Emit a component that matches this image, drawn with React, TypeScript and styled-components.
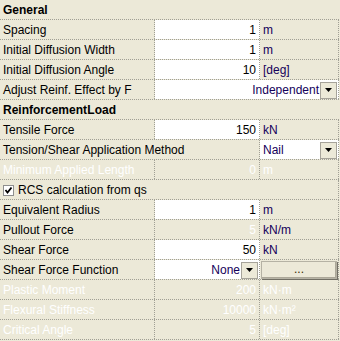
import styled, { createGlobalStyle } from "styled-components";

const GlobalStyle = createGlobalStyle`
	html, body {
		margin: 0;
		padding: 0;
		background: #ECE9D8;
	}
	body {
		font-family: "Liberation Sans", Arial, sans-serif;
		font-size: 12px;
		color: #000;
	}
`;

const LINE = "1px dotted #A09F94";

const Grid = styled.div`
	display: flex;
	flex-direction: column;
	width: 339px;
	height: 341px;
	background: #ECE9D8;
`;

const SectionRow = styled.div`
	display: flex;
	align-items: center;
	height: 20px;
	box-sizing: border-box;
	border-bottom: ${LINE};
	padding-left: 3px;
	font-weight: 700;
	font-size: 12px;
	word-spacing: -3px;
`;

const Row = styled.div`
	display: grid;
	grid-template-columns: 155px 105px 79px;
	height: 20px;
	box-sizing: border-box;
	border-bottom: ${LINE};
`;

const WideRow = styled.div`
	display: flex;
	align-items: center;
	gap: 4px;
	height: 20px;
	box-sizing: border-box;
	border-bottom: ${LINE};
	border-right: ${LINE};
	padding-left: 3px;
`;

const Cell = styled.div<{ $white?: boolean; $disabled?: boolean; $noLine?: boolean }>`
	display: flex;
	align-items: center;
	box-sizing: border-box;
	border-right: ${p => (p.$noLine ? "none" : LINE)};
	background: ${p => (p.$white ? "#FFFFFF" : "transparent")};
	color: ${p => (p.$disabled ? "#FFFFFF" : "inherit")};
	white-space: nowrap;
	min-width: 0;
`;

const LabelCell = styled(Cell)`
	padding-left: 3px;
	overflow: visible;
`;

const ValueCell = styled(Cell)`
	justify-content: flex-end;
	padding-right: 3px;
`;

const UnitCell = styled(Cell)`
	padding-left: 3px;
	color: ${p => (p.$disabled ? "#FFFFFF" : "#14005A")};
`;

const ComboCell = styled(Cell)<{ $span?: number }>`
	grid-column: span ${p => p.$span ?? 1};
	justify-content: flex-end;
	padding-right: 1px;
	gap: 1px;
	color: #14005A;
`;

const ComboText = styled.span<{ $left?: boolean }>`
	flex: ${p => (p.$left ? 1 : "none")};
	padding-left: ${p => (p.$left ? "3px" : "0")};
`;

const DropButton = styled.div`
	width: 17px;
	height: 17px;
	box-sizing: border-box;
	border: 1px solid #A6A39A;
	background: #ECE9D8;
	display: flex;
	align-items: center;
	justify-content: center;
	margin-top: 1px;
	flex: none;
`;

const Arrow = () => (
	<svg width="7" height="4" viewBox="0 0 7 4">
		<polygon points="0,0 7,0 3.5,4" fill="#000" />
	</svg>
);

const ButtonCell = styled(Cell)`
	display: block;
`;

const EllipsisButton = styled.div`
	display: flex;
	align-items: center;
	justify-content: center;
	margin: 1px 1px 0 1px;
	height: 18px;
	box-sizing: border-box;
	border: 1px solid;
	border-color: #FFFFFF #8E8C80 #8E8C80 #FFFFFF;
	box-shadow: 1px 1px 0 #716F64, inset -1px -1px 0 #ACA899;
	outline: 1px solid #B5B2A4;
	outline-offset: -1px;
	background: #ECE9D8;
	color: #3A2A00;
	font-size: 12px;
	padding-bottom: 3px;
`;

const CheckBox = styled.span`
	width: 11px;
	height: 11px;
	box-sizing: border-box;
	border: 1px solid #8E8F8F;
	background: #FFFFFF;
	display: inline-flex;
	align-items: center;
	justify-content: center;
	margin-top: 1px;
`;

type Line = {
	label: string;
	value?: string;
	unit?: string;
	white?: boolean;
	disabled?: boolean;
	labelDisabled?: boolean;
	unitDisabled?: boolean;
};

const NumRow = ({ label, value, unit, white, disabled, labelDisabled, unitDisabled }: Line) => (
	<Row>
		<LabelCell $disabled={labelDisabled ?? disabled}>{label}</LabelCell>
		<ValueCell $white={white} $disabled={disabled}>{value}</ValueCell>
		<UnitCell $disabled={unitDisabled ?? disabled}>{unit}</UnitCell>
	</Row>
);

export default function App() {
	return (
		<>
			<GlobalStyle />
			<Grid>
				<SectionRow>General</SectionRow>
				<NumRow label="Spacing" value="1" unit="m" white />
				<NumRow label="Initial Diffusion Width" value="1" unit="m" white />
				<NumRow label="Initial Diffusion Angle" value="10" unit="[deg]" white />
				<Row>
					<LabelCell>Adjust Reinf. Effect by F</LabelCell>
					<ComboCell $white $span={2}>
						<ComboText>Independent</ComboText>
						<DropButton><Arrow /></DropButton>
					</ComboCell>
				</Row>

				<SectionRow>Reinforcement Load</SectionRow>
				<NumRow label="Tensile Force" value="150" unit="kN" white />
				<Row>
					<LabelCell $noLine>Tension/Shear Application Method</LabelCell>
					<ValueCell />
					<ComboCell $white>
						<ComboText $left>Nail</ComboText>
						<DropButton><Arrow /></DropButton>
					</ComboCell>
				</Row>
				<NumRow label="Minimum Applied Length" value="0" unit="m" disabled />
				<WideRow>
					<CheckBox>
						<svg width="9" height="9" viewBox="0 0 9 9">
							<polyline points="1.5,4 3.5,6.5 7.5,1.5" fill="none" stroke="#000" strokeWidth="1.8" />
						</svg>
					</CheckBox>
					RCS calculation from qs
				</WideRow>
				<NumRow label="Equivalent Radius" value="1" unit="m" white />
				<NumRow label="Pullout Force" value="5" unit="kN/m" disabled labelDisabled={false} unitDisabled={false} />
				<NumRow label="Shear Force" value="50" unit="kN" white />
				<Row>
					<LabelCell>Shear Force Function</LabelCell>
					<ComboCell $white>
						<ComboText>None</ComboText>
						<DropButton><Arrow /></DropButton>
					</ComboCell>
					<ButtonCell>
						<EllipsisButton>...</EllipsisButton>
					</ButtonCell>
				</Row>
				<NumRow label="Plastic Moment" value="200" unit="kN·m" disabled />
				<NumRow label="Flexural Stiffness" value="10000" unit="kN·m²" disabled />
				<NumRow label="Critical Angle" value="5" unit="[deg]" disabled />
			</Grid>
		</>
	);
}
